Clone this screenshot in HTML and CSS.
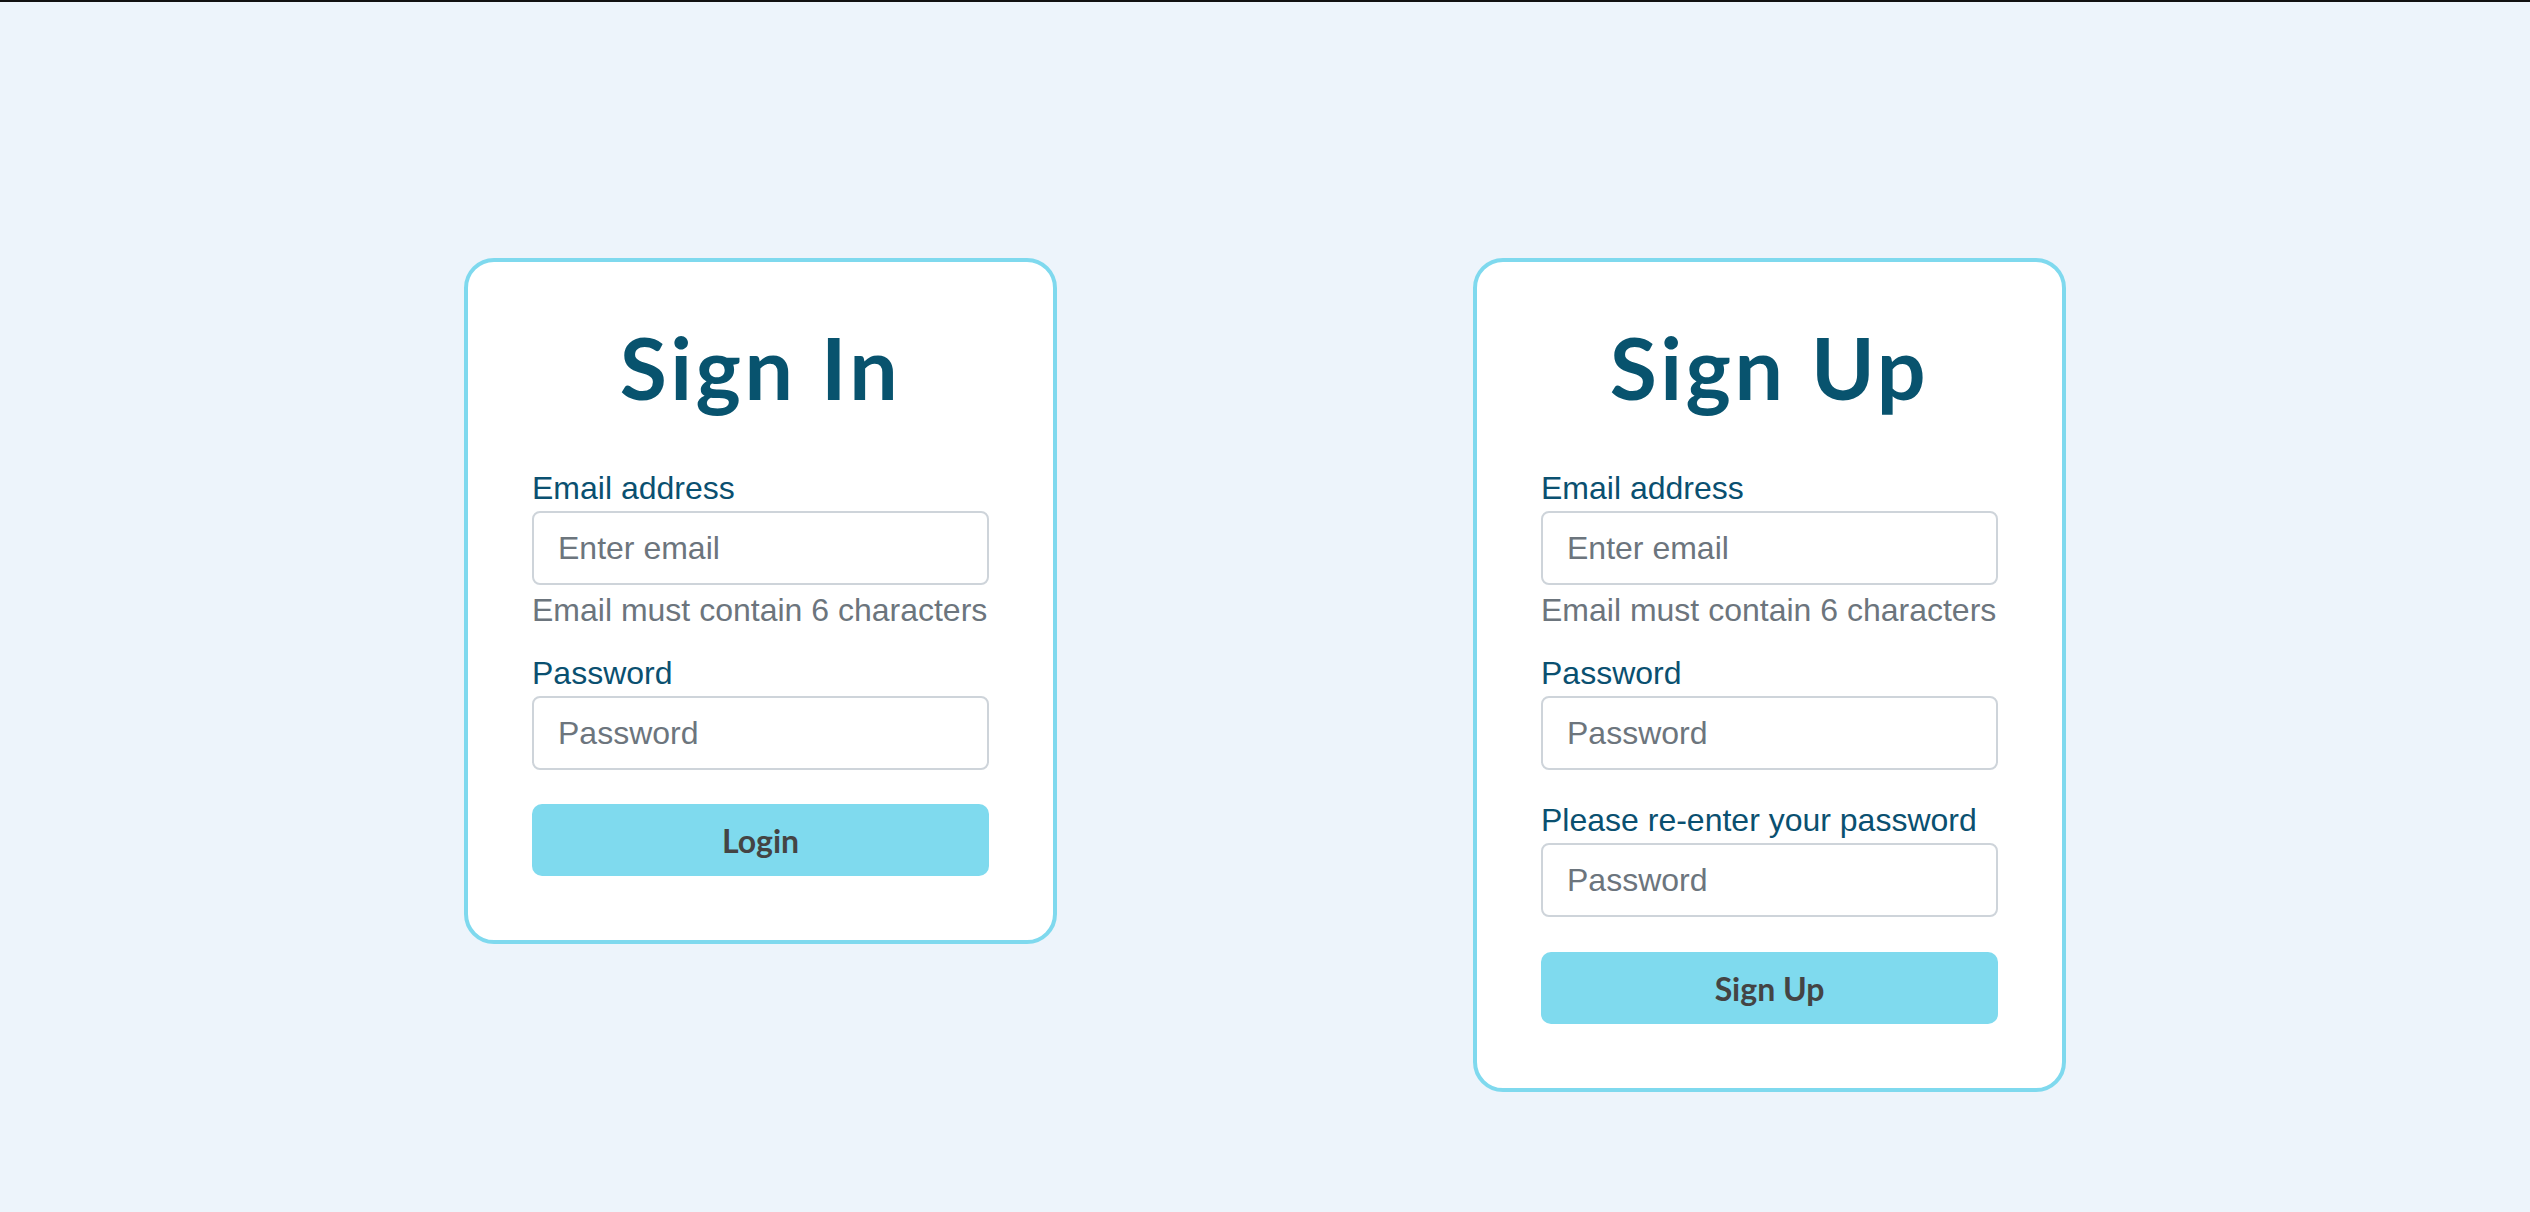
FILE: index.html
```html
<!DOCTYPE html>
<html lang="en">
<head>
<meta charset="utf-8">
<title>Sign In / Sign Up</title>
<link rel="stylesheet" href="styles.css">
</head>
<body>
<main class="page">
  <section class="card">
    <h1 class="card-title">Sign In</h1>
    <form class="form">
      <div class="group group-email">
        <label class="label" for="si-email">Email address</label>
        <input class="input" id="si-email" type="email" placeholder="Enter email">
        <small class="hint">Email must contain 6 characters</small>
      </div>
      <div class="group">
        <label class="label" for="si-pass">Password</label>
        <input class="input" id="si-pass" type="password" placeholder="Password">
      </div>
      <button class="btn" type="button">Login</button>
    </form>
  </section>

  <section class="card">
    <h1 class="card-title">Sign Up</h1>
    <form class="form">
      <div class="group group-email">
        <label class="label" for="su-email">Email address</label>
        <input class="input" id="su-email" type="email" placeholder="Enter email">
        <small class="hint">Email must contain 6 characters</small>
      </div>
      <div class="group">
        <label class="label" for="su-pass">Password</label>
        <input class="input" id="su-pass" type="password" placeholder="Password">
      </div>
      <div class="group group-confirm">
        <label class="label" for="su-pass2">Please re-enter your password</label>
        <input class="input" id="su-pass2" type="password" placeholder="Password">
      </div>
      <button class="btn" type="button">Sign Up</button>
    </form>
  </section>
</main>
</body>
</html>
```
FILE: styles.css
```css
* {
  box-sizing: border-box;
}

html, body {
  margin: 0;
  padding: 0;
}

body {
  min-height: 1212px;
  background: #edf4fb;
  border-top: 2px solid #111;
  font-family: "Liberation Sans", Arial, Helvetica, sans-serif;
}

.page {
  display: flex;
  justify-content: center;
  align-items: flex-start;
  gap: 416px;
  padding-top: 256px;
}

.card {
  width: 593px;
  background: #ffffff;
  border: 4px solid #7fd9ee;
  border-radius: 30px;
  padding: 53px 64px 64px;
}

.card-title {
  margin: 0 0 48px;
  font-family: Lato, "Open Sans", sans-serif;
  font-weight: 700;
  font-size: 86px;
  line-height: 1.2;
  letter-spacing: 3.5px;
  color: #08536e;
  text-align: center;
}

.form {
  display: flex;
  flex-direction: column;
}

.group {
  display: flex;
  flex-direction: column;
  margin-bottom: 28px;
}

.group-email {
  margin-bottom: 18px;
}

.group-confirm {
  padding-bottom: 1px;
}

.label {
  display: block;
  margin: 0;
  font-size: 32px;
  line-height: 45px;
  color: #0a5070;
}

.input {
  display: block;
  width: 100%;
  height: 74px;
  margin: 0;
  padding: 0 24px;
  border: 2px solid #ced4da;
  border-radius: 8px;
  background: #fff;
  font-family: "Liberation Sans", Arial, Helvetica, sans-serif;
  font-size: 32px;
  color: #495057;
  outline: none;
}

.input::placeholder {
  color: #6c757d;
  opacity: 1;
}

.hint {
  display: block;
  margin-top: 3px;
  font-size: 32px;
  line-height: 45px;
  color: #6c757d;
}

.btn {
  display: block;
  width: 100%;
  height: 72px;
  margin-top: 6px;
  border: none;
  border-radius: 10px;
  background: #7fdaee;
  font-family: Lato, "Open Sans", sans-serif;
  font-weight: 700;
  font-size: 32px;
  color: #444444;
  cursor: pointer;
}
```
